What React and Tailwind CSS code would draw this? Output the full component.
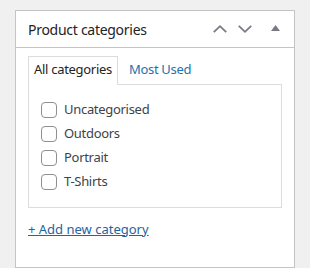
import React from "react";

const cats = ["Uncategorised", "Outdoors", "Portrait", "T-Shirts"];

function Chevron({ up }) {
  return (
    <svg width="14" height="10" viewBox="0 0 14 10" fill="none" stroke="#787c82" strokeWidth="1.8">
      {up ? <path d="M0.8 8.2 L7 2.2 L13.2 8.2" /> : <path d="M0.8 1.8 L7 7.8 L13.2 1.8" />}
    </svg>
  );
}

export default function App() {
  return (
    <div className="min-h-[268px] w-[310px] bg-[#f0f0f1] pt-[10px] pl-[15px]" style={{ fontFamily: '"Noto Sans", sans-serif' }}>
      <div className="w-[280px] border border-[#c3c4c7] bg-white">
        <div className="flex h-[37px] items-center border-b border-[#c3c4c7] pl-[12px] pr-[14px]">
          <h2 className="flex-1 text-[14px] tracking-[-0.28px] text-[#1d2327]">Product categories</h2>
          <div className="flex items-center">
            <Chevron up />
            <span className="ml-[11px]"><Chevron /></span>
            <svg width="9" height="6" viewBox="0 0 9 6" className="ml-[19px] -mt-[2px]">
              <path d="M0 6 L4.5 0 L9 6 Z" fill="#787c82" />
            </svg>
          </div>
        </div>
        <div className="px-[12px] pt-[8px] pb-[28px]">
          <div className="flex tracking-[-0.3px]">
            <div className="relative -mb-px border border-b-0 border-[#dcdcde] bg-white px-[5px] pt-[3px] pb-[5px] text-[13px] text-[#1d2327]">
              All categories
            </div>
            <div className="px-[11px] pt-[4px] text-[13px] text-[#2271b1]">Most Used</div>
          </div>
          <div className="border border-[#dcdcde] px-[12px] py-[17px] tracking-[-0.3px]">
            <div className="flex flex-col gap-[8px]">
              {cats.map((c) => (
                <label key={c} className="flex h-[16px] items-center gap-[7px] text-[13px] text-[#3c434a]">
                  <span className="h-[16px] w-[16px] shrink-0 rounded-[4px] border border-[#8c8f94] bg-white" />
                  {c}
                </label>
              ))}
            </div>
          </div>
          <div className="mt-[12px] text-[13px] text-[#2264a0] underline">+ Add new category</div>
        </div>
      </div>
    </div>
  );
}
